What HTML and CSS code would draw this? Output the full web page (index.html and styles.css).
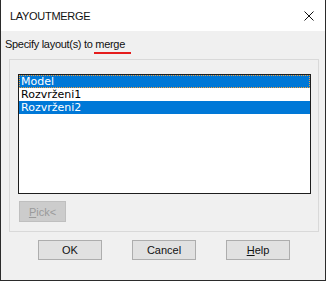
FILE: index.html
```html
<!DOCTYPE html>
<html lang="en">
    <head>
        <link rel="stylesheet" href="styles.css">
    </head>
    <body>
        <div class="window">
            <div class="titlebar">
                <span class="title">LAYOUTMERGE</span>
                <svg class="close" width="10" height="10" viewBox="0 0 10 10">
                    <path d="M0.5 0.5 L9.5 9.5 M9.5 0.5 L0.5 9.5" stroke="#111" stroke-width="1" fill="none"/>
                </svg>
            </div>
            <div class="content">
                <p class="prompt">Specify layout(s) to <span class="mark">merge</span></p>
                <div class="group">
                    <div class="listbox">
                        <div class="item selected focus">Model</div>
                        <div class="item">Rozvrženi1</div>
                        <div class="item selected">Rozvrženi2</div>
                    </div>
                    <button class="pick" disabled><u>P</u>ick&lt;</button>
                </div>
                <div class="buttons">
                    <button class="btn">OK</button>
                    <button class="btn">Cancel</button>
                    <button class="btn"><u>H</u>elp</button>
                </div>
            </div>
        </div>
    </body>
</html>
```
FILE: styles.css
```css
body {
    margin: 0;
    font-family: "Liberation Sans", Arial, sans-serif;
}
.window {
    width: 326px;
    height: 281px;
    box-sizing: border-box;
    border: 1px solid #2b2b2b;
    border-top: none;
    display: flex;
    flex-direction: column;
}
.titlebar {
    height: 31px;
    background-color: white;
    display: flex;
    align-items: center;
    justify-content: space-between;
    padding: 0 11px 0 9px;
}
.title {
    font-size: 11px;
    letter-spacing: -0.3px;
    color: #111;
}
.content {
    flex: 1;
    background-color: #f0f0f0;
}
.prompt {
    margin: 0;
    padding: 6px 0 0 4px;
    font-size: 11px;
    line-height: 14px;
    letter-spacing: -0.3px;
    color: #111;
}
.mark {
    padding: 0 6px 2px 1px;
    margin-left: -1px;
    border-bottom: 2px solid #e51c1c;
}
.group {
    margin: 8px 0 0 8px;
    width: 310px;
    height: 173px;
    box-sizing: border-box;
    border: 1px solid #d9d9d9;
    padding: 14px 0 0 8px;
}
.listbox {
    width: 293px;
    height: 120px;
    box-sizing: border-box;
    border: 1px solid #1e1e1e;
    background-color: white;
    font-family: "DejaVu Sans", sans-serif;
    font-size: 11px;
}
.item {
    height: 13px;
    line-height: 13px;
    padding-left: 2px;
    color: black;
    box-sizing: border-box;
}
.selected {
    background-color: #0078d7;
    color: white;
}
.focus {
    border: 1px dotted #f0a040;
    padding-left: 1px;
    line-height: 11px;
}
.pick {
    display: block;
    margin: 7px 0 0 1px;
    width: 47px;
    height: 21px;
    border: 1px solid #bfbfbf;
    background-color: #cccccc;
    color: #9a9a9a;
    font-family: "Liberation Sans", Arial, sans-serif;
    font-size: 11px;
    padding: 0;
}
.buttons {
    display: flex;
    gap: 30px;
    padding: 8px 0 0 37px;
}
.btn {
    width: 64px;
    height: 20px;
    border: 1px solid #adadad;
    background-color: #e1e1e1;
    font-family: "Liberation Sans", Arial, sans-serif;
    font-size: 11px;
    color: #111;
    padding: 0;
}
```
